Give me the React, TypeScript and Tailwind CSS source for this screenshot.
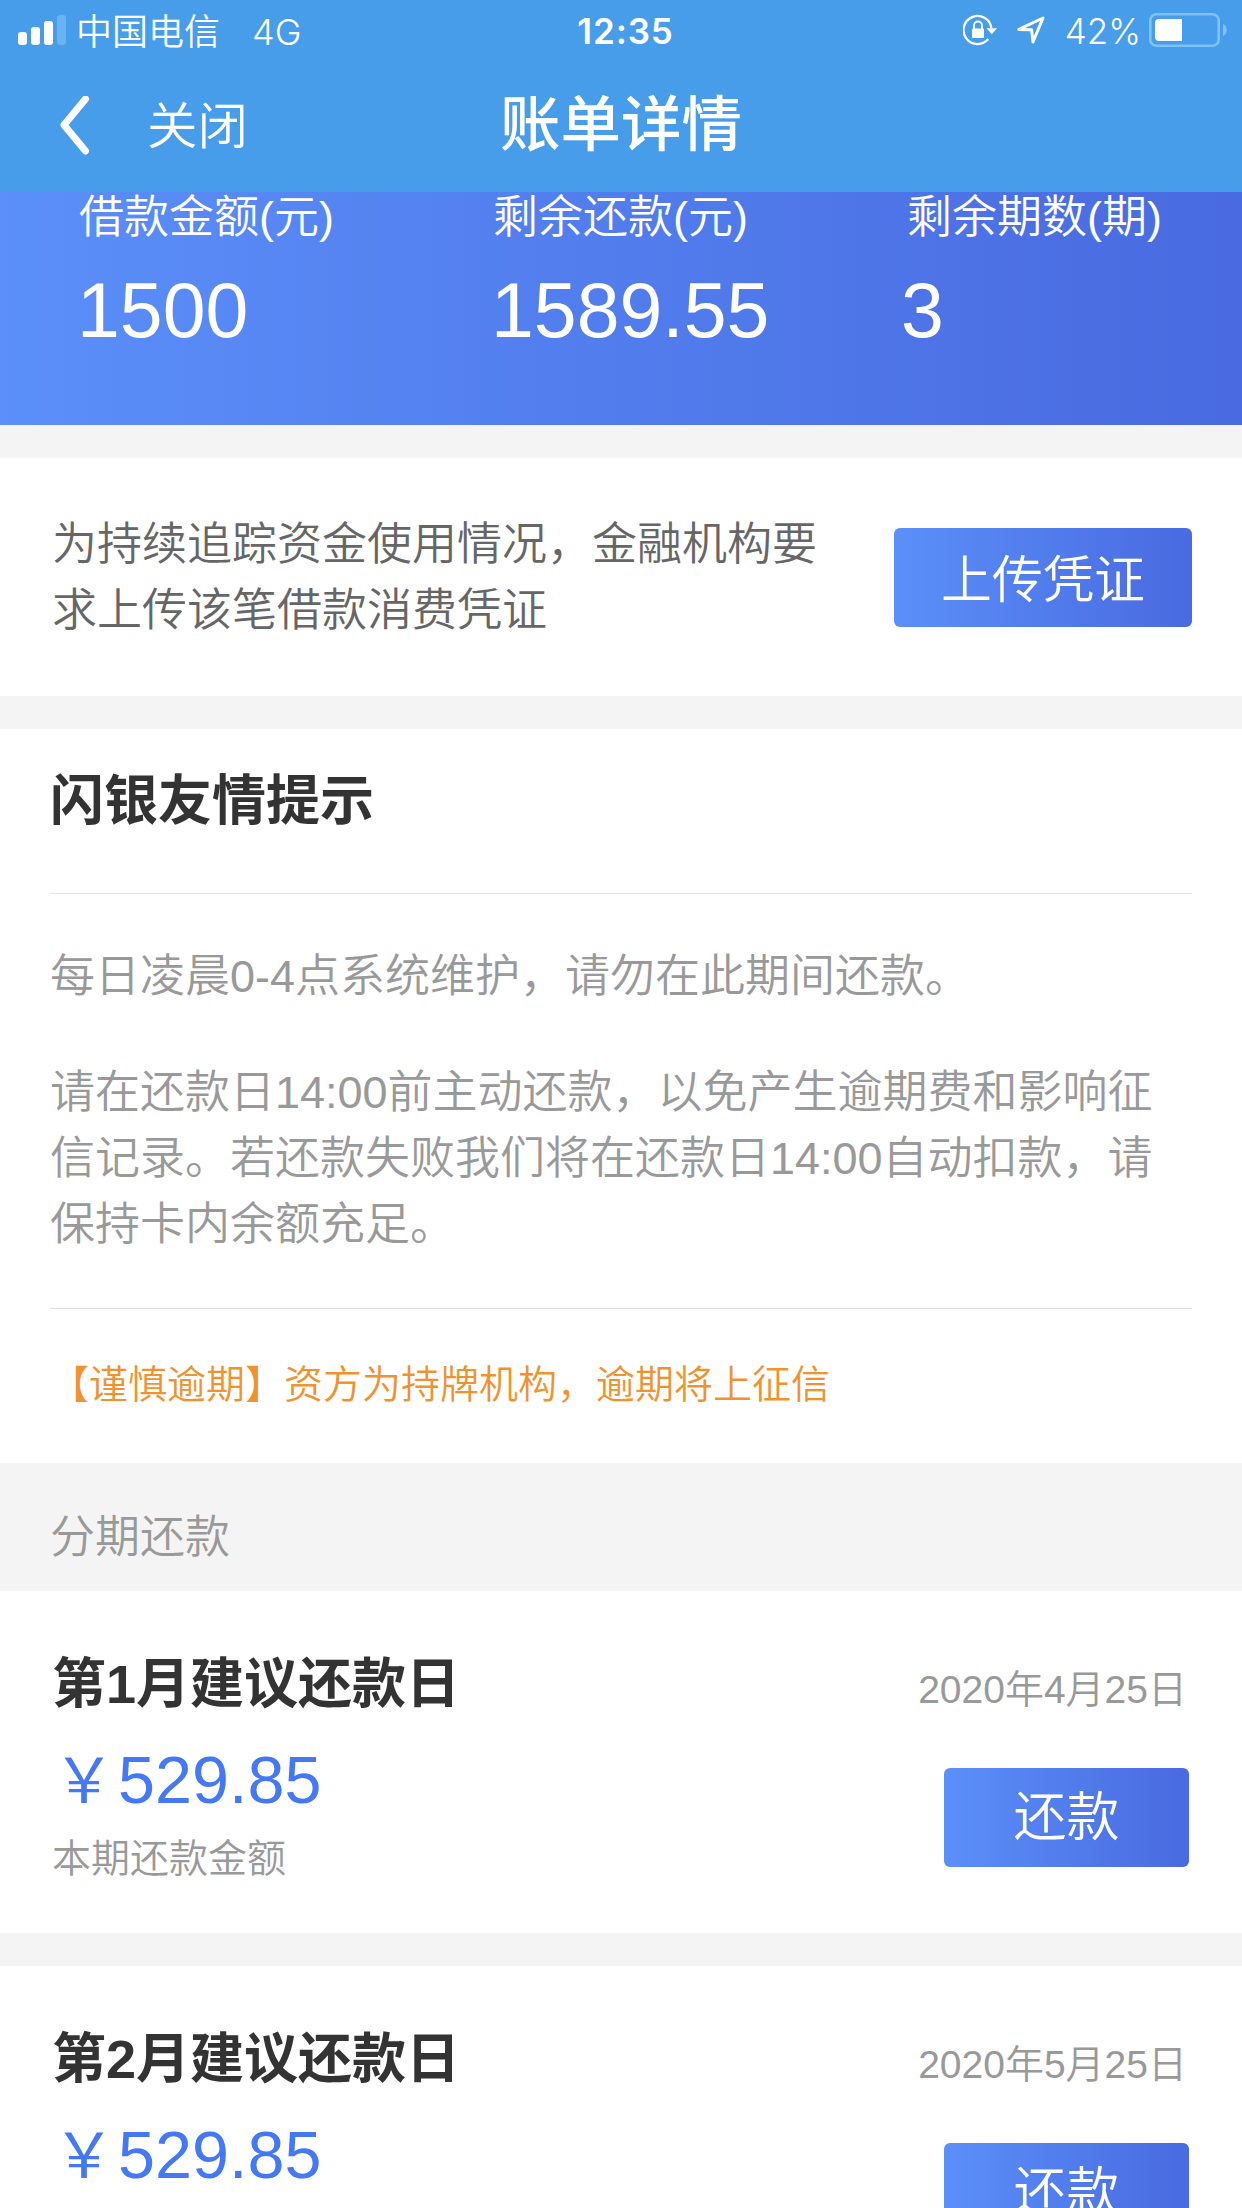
import { useState } from 'react';

type Installment = {
    month: number;
    date: string;
    amount: string;
};

const summary = [
    { label: '借款金额(元)', value: '1500', valueClassName: '-ml-[2px]' },
    { label: '剩余还款(元)', value: '1589.55', valueClassName: '-ml-[2px]' },
    { label: '剩余期数(期)', value: '3', valueClassName: '-ml-[6px]' },
];

const tips = [
    '每日凌晨0-4点系统维护，请勿在此期间还款。',
    '请在还款日14:00前主动还款，以免产生逾期费和影响征信记录。若还款失败我们将在还款日14:00自动扣款，请保持卡内余额充足。',
];

const installments: Installment[] = [
    { month: 1, date: '2020年4月25日', amount: '529.85' },
    { month: 2, date: '2020年5月25日', amount: '529.85' },
];

const SignalIcon = () => (
    <svg width="48" height="30" viewBox="0 0 48 30" fill="white">
        <rect x="0" y="17" width="9" height="13" rx="3" />
        <rect x="13" y="12" width="9" height="18" rx="3" />
        <rect x="26" y="6" width="9" height="24" rx="3" />
        <rect x="39" y="0" width="9" height="30" rx="3" fill="#67b4f0" />
    </svg>
);

const RotationLockIcon = () => (
    <svg width="34" height="32" viewBox="0 0 34 32" fill="none">
        <path d="M28.4 14A14 14 0 1 0 25.3 25" stroke="white" strokeWidth="2.3" />
        <path d="M23.5 14.2H34L28.8 20.2Z" fill="white" />
        <rect x="9" y="14.5" width="12" height="9.5" rx="1.2" fill="white" />
        <path d="M11 15V11.5A4 4 0 0 1 19 11.5V15" stroke="white" strokeWidth="1.8" />
    </svg>
);

const LocationIcon = () => (
    <svg width="28" height="28" viewBox="0 0 28 28" fill="none" stroke="white" strokeWidth="3" strokeLinejoin="round">
        <path d="M1.8 13.4L26 2L16 26L14.6 13.8Z" />
    </svg>
);

const BatteryIcon = () => (
    <svg width="78" height="34" viewBox="0 0 78 34">
        <rect x="1.3" y="1.3" width="68.4" height="31.4" rx="6" fill="none" stroke="#7fc2f5" strokeWidth="2.6" />
        <path d="M74 11C79 12.5 79 21.5 74 23Z" fill="#7fc2f5" />
        <path d="M10 6H33V28H10A4 4 0 0 1 6 24V10A4 4 0 0 1 10 6Z" fill="white" />
    </svg>
);

const StatusBar = () => (
    <div className="h-[60px] pl-[18px] pr-[15px] grid grid-cols-3 items-center font-['Inter','Noto_Sans_CJK_SC',sans-serif] text-4xl font-[350]">
        <div className="flex items-center">
            <SignalIcon />
            <span className="ml-[10px] mt-[3px]">中国电信</span>
            <span className="ml-8 mt-[3px]">4G</span>
        </div>
        <span className="pl-1.5 pt-[3px] text-center text-[35px] font-semibold tracking-wide">12:35</span>
        <div className="flex items-center justify-end">
            <RotationLockIcon />
            <span className="ml-5"><LocationIcon /></span>
            <span className="ml-5 mr-2 mt-[3px] text-[35px]">42%</span>
            <BatteryIcon />
        </div>
    </div>
);

const InstallmentCard = ({ item, onRepay }: { item: Installment; onRepay: (month: number) => void }) => (
    <div className="h-[342px] bg-white pl-[52px] pr-[53px] flex justify-between">
        <div className="pt-[57px]">
            <h3 className="text-[54px] leading-[72px] font-bold text-[#333]">第{item.month}月建议还款日</h3>
            <p className="mt-6 text-[66.5px] leading-[72px] text-[#4478f4]">
                <span className="ml-px mr-[3px] text-[62px]">￥</span>{item.amount}
            </p>
            <p className="mt-[21px] text-[39px] leading-10 font-[350] text-[#999]">本期还款金额</p>
        </div>
        <div className="flex flex-col items-end">
            <span className="mt-[71px] mr-[2px] text-[39px] leading-[56px] font-[350] text-[#999]">{item.date}</span>
            <button
                onClick={() => onRepay(item.month)}
                className="mt-[50px] w-[245px] h-[99px] rounded-md bg-linear-to-r from-[#5b8ff9] to-[#496ae0] text-white text-[53px] font-[350]"
            >
                还款
            </button>
        </div>
    </div>
);

const App = () => {
    const [, setSelectedMonth] = useState<number | null>(null);

    return (
        <div className="w-[1242px] h-[2208px] overflow-hidden bg-[#f4f4f4] font-['Liberation_Sans','Noto_Sans_CJK_SC',sans-serif]">
            <header className="h-48 bg-[#479de9] text-white">
                <StatusBar />
                <div className="h-[132px] grid grid-cols-3 items-center">
                    <div className="flex items-center pl-[60px]">
                        <svg width="30" height="60" viewBox="0 0 30 60" fill="none" stroke="white" strokeWidth="7" strokeLinecap="round" strokeLinejoin="round">
                            <path d="M25.5 3L4 29L25.5 55" />
                        </svg>
                        <button className="ml-[57px] pt-[2px] text-[50.5px] font-[350]">关闭</button>
                    </div>
                    <h1 className="pb-[3px] text-center text-[60.5px] leading-[80px] font-medium">账单详情</h1>
                </div>
            </header>

            <section className="h-[233px] grid grid-cols-3 bg-linear-to-r from-[#5b8ff9] to-[#496ae0] text-white">
                {summary.map(item => (
                    <div key={item.label} className="pl-[79px] pt-px">
                        <p className="text-[45px] leading-[50px] font-[350]">{item.label}</p>
                        <p className={`mt-[27px] text-[77px] leading-[80px] ${item.valueClassName}`}>{item.value}</p>
                    </div>
                ))}
            </section>

            <section className="mt-[33px] h-[238px] pl-[52px] pr-[50px] flex items-center justify-between bg-white">
                <p className="w-[780px] pt-[2px] text-[45px] leading-[66px] font-[350] text-[#666]">
                    为持续追踪资金使用情况，金融机构要求上传该笔借款消费凭证
                </p>
                <button className="w-[298px] h-[99px] pt-2 rounded-md bg-linear-to-r from-[#5b8ff9] to-[#496ae0] text-white text-[51px] font-[350]">
                    上传凭证
                </button>
            </section>

            <section className="mt-[33px] h-[734px] pl-[50px] pr-[50px] bg-white">
                <h2 className="h-[165px] pt-[36px] text-[54px] leading-[72px] font-bold text-[#333] border-b border-[#e6e6e6]">
                    闪银友情提示
                </h2>
                <div className="h-[415px] pt-[50px] border-b border-[#e0e0e0] text-[45px] leading-[66px] font-[350] text-[#999]">
                    {tips.map(tip => (
                        <p key={tip} className="mb-[50px]">{tip}</p>
                    ))}
                </div>
                <p className="pt-12 text-[39px] leading-[56px] font-[350] text-[#f0932f]">
                    【谨慎逾期】资方为持牌机构，逾期将上征信
                </p>
            </section>

            <div className="h-32 pl-[50px] pt-[22px] flex items-center text-[45px] font-[350] text-[#999]">分期还款</div>

            <div className="flex flex-col gap-[33px]">
                {installments.map(item => (
                    <InstallmentCard key={item.month} item={item} onRepay={setSelectedMonth} />
                ))}
            </div>
        </div>
    );
};

export default App;
